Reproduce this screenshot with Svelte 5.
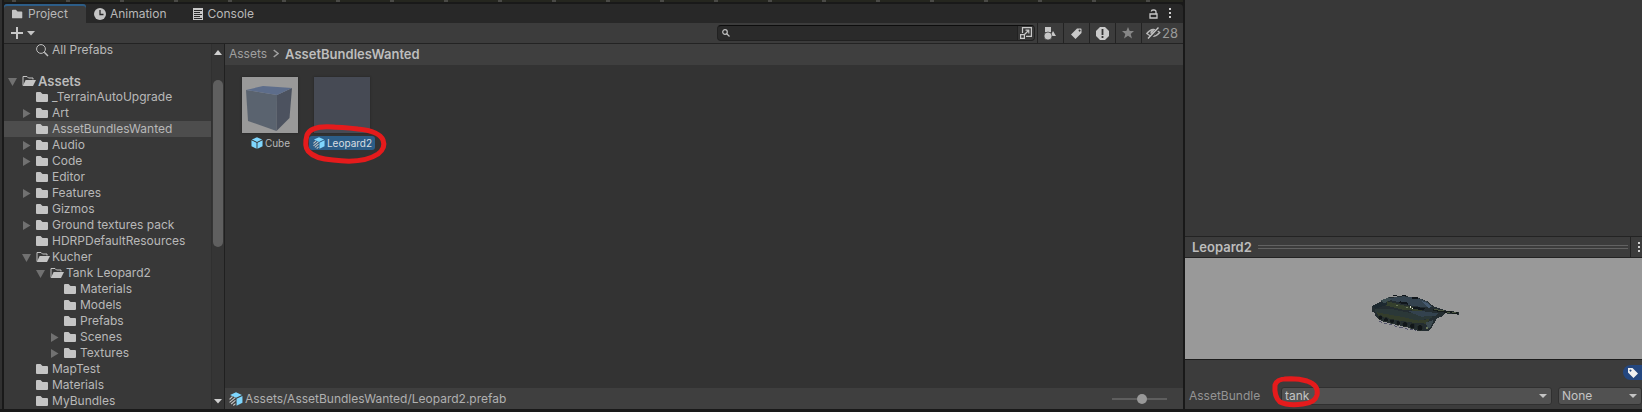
<script>
  const rows = [
    { name: '_TerrainAutoUpgrade', depth: 1 },
    { name: 'Art', depth: 1, fold: 'closed' },
    { name: 'AssetBundlesWanted', depth: 1, selected: true },
    { name: 'Audio', depth: 1, fold: 'closed' },
    { name: 'Code', depth: 1, fold: 'closed' },
    { name: 'Editor', depth: 1 },
    { name: 'Features', depth: 1, fold: 'closed' },
    { name: 'Gizmos', depth: 1 },
    { name: 'Ground textures pack', depth: 1, fold: 'closed' },
    { name: 'HDRPDefaultResources', depth: 1 },
    { name: 'Kucher', depth: 1, fold: 'open' },
    { name: 'Tank Leopard2', depth: 2, fold: 'open' },
    { name: 'Materials', depth: 3 },
    { name: 'Models', depth: 3 },
    { name: 'Prefabs', depth: 3 },
    { name: 'Scenes', depth: 3, fold: 'closed' },
    { name: 'Textures', depth: 3, fold: 'closed' },
    { name: 'MapTest', depth: 1 },
    { name: 'Materials', depth: 1 },
    { name: 'MyBundles', depth: 1 }
  ];
  let zoom = $state(56);
</script>

{#snippet folder(open)}
  <svg class="folder" width="14" height="12" viewBox="0 0 14 12" aria-hidden="true">
    {#if open}
      <path d="M1 10.5V1.5H5L6.5 3H11V4.5" fill="none" stroke="#c4c4c4" />
      <path d="M3.6 5H14L11 11H.8Z" fill="#c4c4c4" />
    {:else}
      <path d="M0 2Q0 1 1 1H4.5L6.5 3H11Q12 3 12 4V10Q12 11 11 11H1Q0 11 0 10Z" fill="#c4c4c4" />
    {/if}
  </svg>
{/snippet}

{#snippet arrow(state)}
  <svg class="fold" width="9" height="9" viewBox="0 0 9 9" aria-hidden="true">
    {#if state === 'open'}
      <path d="M0 1H9L4.5 9Z" fill="#717171" />
    {:else if state === 'closed'}
      <path d="M1 0V9L8.500 4.500Z" fill="#717171" />
    {/if}
  </svg>
{/snippet}

{#snippet prefab(variant, size)}
  <svg width={size} height={size} viewBox="0 0 13 13" aria-hidden="true">
    <path d="M6.500 .2 12 2.700 6.500 5.300 1 2.700Z" fill="#7fd6fd" />
    <path d="M7 6.200 12.500 3.600V10L7 12.800Z" fill="#7fd6fd" />
    {#if variant}
      <path d="M.5 6.800 3.300 4.200M.5 9.600 5.800 5.200M2 11.200 6 7.800M4 12.500 6 10.800" stroke="#c4c4c4" stroke-width="1.100" />
    {:else}
      <path d="M6 6.200 .5 3.600V10L6 12.800Z" fill="#7fd6fd" />
    {/if}
  </svg>
{/snippet}

{#snippet dots()}
  <svg width="3" height="11" viewBox="0 0 3 11" aria-hidden="true">
    <path d="M0 0H2V2H0ZM0 4H2V6H0ZM0 8H2V10H0Z" fill="#d0d0d0" />
  </svg>
{/snippet}

<div class="editor">
  <section class="project">
    <div class="scene-edge"></div>
    <div class="tabs" role="tablist">
      <button class="tab active" role="tab" aria-selected="true">{@render folder(false)}Project</button>
      <button class="tab" role="tab" aria-selected="false">
        <svg width="12" height="12" viewBox="0 0 12 12" aria-hidden="true">
          <circle cx="6" cy="6" r="6" fill="#c4c4c4" />
          <path d="M6 2V6.500H9.500" fill="none" stroke="#282828" stroke-width="1.300" />
        </svg>Animation
      </button>
      <button class="tab" role="tab" aria-selected="false">
        <svg width="11" height="12" viewBox="0 0 11 12" aria-hidden="true">
          <path d="M0 0H10V12H0Z" fill="#c8c8c8" />
          <path d="M1 2.500H9M1 4.500H7M1 6.500H9M1 8.500H7M1 10.500H9" stroke="#282828" />
        </svg>Console
      </button>
      <div class="tab-tools">
        <button aria-label="Lock">
          <svg width="9" height="10" viewBox="0 0 9 10" aria-hidden="true">
            <path d="M1 5H8V9H1ZM7 5V3Q7 1 5 1H4Q2.500 1 2.300 2.500" fill="none" stroke="#c8c8c8" stroke-width="1.300" />
          </svg>
        </button>
        <button aria-label="Window menu">{@render dots()}</button>
      </div>
    </div>

    <div class="toolbar">
      <button class="create" aria-label="Create">
        <svg width="25" height="12" viewBox="0 0 25 12" aria-hidden="true">
          <path d="M6 0V12M0 6H12" stroke="#c8c8c8" stroke-width="2" />
          <path d="M16 4H24L20 8.500Z" fill="#c4c4c4" />
        </svg>
      </button>
      <div class="search">
        <svg width="8" height="8" viewBox="0 0 8 8" aria-hidden="true">
          <circle cx="3" cy="3" r="2.300" fill="none" stroke="#c0c0c0" stroke-width="1.200" />
          <path d="M4.500 4.500 7.500 7.500" stroke="#c0c0c0" stroke-width="1.300" />
        </svg>
        <input type="text" aria-label="Search assets" />
        <button aria-label="Open in search window">
          <svg width="12" height="12" viewBox="0 0 12 12" aria-hidden="true">
            <path d="M2.500 6V.6H11.400V9.400H6M.6 7.600H4.400V11.400H.6Z" fill="none" stroke="#c8c8c8" stroke-width="1.200" />
            <path d="M4.500 7.500 8.500 3.500M5.500 3.200H8.800V6.500" fill="none" stroke="#c8c8c8" stroke-width="1.200" />
          </svg>
        </button>
      </div>
      <div class="filters">
        <button aria-label="Search by type">
          <svg width="12" height="13" viewBox="0 0 12 13" aria-hidden="true">
            <path d="M1 0H7V5H1ZM9 4 12 9H6.500Z" fill="#c8c8c8" />
            <circle cx="4" cy="9" r="4" fill="#c8c8c8" stroke="#3c3c3c" stroke-width=".7" />
          </svg>
        </button>
        <button aria-label="Search by label">
          <svg width="11" height="11" viewBox="0 0 11 11" aria-hidden="true">
            <path fill-rule="evenodd" d="M6 .5H10L10.500 1V5L4.500 11 0 6.500ZM8.600 1.600A1 1 0 1 0 8.610 1.600Z" fill="#c8c8c8" />
          </svg>
        </button>
        <button aria-label="Search by import log">
          <svg width="13" height="13" viewBox="0 0 13 13" aria-hidden="true">
            <path d="M4 0H9L13 4V9L9 13H4L0 9V4Z" fill="#cacaca" />
            <path d="M6.500 2V8M6.500 9V11" stroke="#333" stroke-width="1.800" />
          </svg>
        </button>
        <button aria-label="Save search">
          <svg width="12" height="12" viewBox="0 0 12 12" aria-hidden="true">
            <path d="M6 0 7.700 4H12L8.700 6.900 10 11.500 6 8.800 2 11.500 3.300 6.900 0 4H4.300Z" fill="#868686" />
          </svg>
        </button>
        <button class="hidden-count" aria-label="Hidden packages: 28">
          <svg width="15" height="12" viewBox="0 0 15 12" aria-hidden="true">
            <path d="M.8 6.500Q7 -1 13.800 5.500Q7.500 12.500 .8 6.500Z" fill="none" stroke="#b8b8b8" stroke-width="1.300" />
            <circle cx="7" cy="5.500" r="2.600" fill="#b8b8b8" />
            <path d="M3 12 13 .5" stroke="#3c3c3c" stroke-width="3" />
            <path d="M2 11.500 12.500 .5" stroke="#c8c8c8" stroke-width="1.300" />
          </svg>28
        </button>
      </div>
    </div>

    <div class="browser">
      <nav class="tree" aria-label="Folders">
        <div class="rows">
          <div class="row gap-after" style="--depth: 1">
            {@render arrow()}
            <svg class="folder" width="14" height="13" viewBox="0 0 14 13" aria-hidden="true">
              <circle cx="5" cy="5" r="4.400" fill="none" stroke="#c0c0c0" />
              <path d="M8.300 8.300 12 12" stroke="#c0c0c0" stroke-width="1.500" />
            </svg>All Prefabs
          </div>
          <div class="row root" style="--depth: 0">{@render arrow('open')}{@render folder(true)}Assets</div>
          {#each rows as r}
            <div class="row" class:selected={r.selected} style="--depth: {r.depth}">
              {@render arrow(r.fold)}{@render folder(r.fold === 'open')}{r.name}
            </div>
          {/each}
        </div>
        <div class="scrollbar">
          <svg width="8" height="5" viewBox="0 0 8 5" aria-hidden="true"><path d="M0 5H8L4 0Z" fill="#d0d0d0" /></svg>
          <div class="scroll-thumb"></div>
          <svg width="8" height="5" viewBox="0 0 8 5" aria-hidden="true"><path d="M0 0H8L4 4.500Z" fill="#d0d0d0" /></svg>
        </div>
      </nav>

      <div class="content">
        <div class="crumbs">
          <span>Assets</span>
          <svg width="6" height="9" viewBox="0 0 6 9" aria-hidden="true"><path d="M.7 1 5 4.500 .7 8" fill="none" stroke="#a0a0a0" stroke-width="1.500" /></svg>
          <strong>AssetBundlesWanted</strong>
        </div>
        <div class="assets">
          <div class="asset">
            <div class="thumb light">
              <svg viewBox="0 0 56 56" aria-hidden="true">
                <path d="M4 13 35 18 34.500 54 6 44Z" fill="#5a636f" />
                <path d="M35 18 50 11 47.500 41 34.500 54Z" fill="#4c525f" />
                <path d="M4 13 21 9 50 11 35 18Z" fill="#5d6d8b" />
              </svg>
            </div>
            <div class="name">{@render prefab(false, 12)}Cube</div>
          </div>
          <div class="asset">
            <div class="thumb"></div>
            <div class="name picked">
              {@render prefab(true, 12)}Leopard2
              <svg class="mark" width="84" height="42" viewBox="0 0 84 42" aria-hidden="true">
                <path d="M31 4Q8 2 4 12Q1 23 5 28Q12 36 30 37Q60 41 75 31Q83 25 80 17Q76 8 55 6Q38 4 27 4" />
              </svg>
            </div>
          </div>
        </div>
        <div class="status">
          {@render prefab(true, 14)}
          <span>Assets/AssetBundlesWanted/Leopard2.prefab</span>
          <input type="range" min="0" max="100" bind:value={zoom} aria-label="Thumbnail size" />
        </div>
      </div>
    </div>
  </section>

  <aside class="inspector">
    <div class="properties"></div>
    <header>
      <h2>Leopard2</h2>
      <div class="grip"></div>
      <button aria-label="Preview menu">{@render dots()}</button>
    </header>
    <div class="preview">
      <svg width="90" height="38" viewBox="64 44 270 114" shape-rendering="crispEdges" role="img" aria-label="Leopard2 preview">
        <path d="M66 80 98 64 122 53 160 50 205 55 234 66 253 82 290 94 328 98 328 106 285 102 276 112 262 117 246 145 236 155 205 155 170 143 130 134 100 127 78 112 76 102 66 96Z" fill="#242d31" />
        <path d="M120 56 160 51 204 56 234 67 248 82 226 84 190 80 128 64Z" fill="#34434f" />
        <path d="M68 80 96 68 122 66 112 76 78 88Z" fill="#1d2930" />
        <path d="M92 64 116 54 124 62 104 72Z" fill="#3b4c50" />
        <path d="M112 66 168 80 220 88 214 96 160 91 110 79Z" fill="#35402d" />
        <path d="M76 88 130 90 176 100 244 106 248 116 206 124 132 112 78 100Z" fill="#2b3838" />
        <path d="M82 99 120 106 160 113 206 124 240 119 232 133 196 131 138 122 86 111Z" fill="#343d2b" />
        <path d="M176 96 222 96 266 102 258 110 214 112Z" fill="#33424e" />
        <path d="M218 66 232 70 246 82 236 86Z" fill="#465a70" />
        <path d="M130 48H142V51H130ZM156 47H168V51H156ZM188 54H204V59H188ZM150 66 176 70 174 76 146 71ZM192 82 228 87 222 93 190 88Z" fill="#10161b" />
        <path d="M250 92 286 97 326 102" fill="none" stroke="#151b1b" stroke-width="6" />
        <path d="M254 90 282 95M292 98H300M308 99H318" stroke="#4b5640" stroke-width="3" />
        <g fill="#111619" stroke="#2a332e" stroke-width="2">
          <circle cx="92" cy="115" r="7" /><circle cx="109" cy="121" r="7" /><circle cx="127" cy="126" r="7" />
          <circle cx="146" cy="131" r="7" /><circle cx="166" cy="135" r="8" /><circle cx="188" cy="140" r="8" /><circle cx="211" cy="145" r="9" />
        </g>
        <path d="M88 126 104 132 126 137 166 148 200 154" fill="none" stroke="#53546c" stroke-width="3" stroke-dasharray="9 7" />
        <path d="M228 130 252 122 244 142 234 148Z" fill="#3d4b51" />
        <path d="M180 81H184V87H180ZM186 86H190V90H186Z" fill="#dfe4d2" />
        <path d="M140 76H146V79H140ZM170 84H176V87H170ZM228 144H234V149H228Z" fill="#6b785b" />
      </svg>
    </div>
    <div class="labels">
      <button aria-label="Asset labels">
        <svg width="10" height="10" viewBox="0 0 10 10" aria-hidden="true">
          <path fill-rule="evenodd" d="M0 0H4.500L10 5.500 5.500 10 0 4.500ZM2.500 1.400A1 1 0 1 0 2.510 1.400Z" fill="#f0f0f0" />
        </svg>
      </button>
    </div>
    <div class="bundle">
      <label for="bundle">AssetBundle</label>
      <div class="pick main">
        <select id="bundle"><option>tank</option></select>
        <svg class="mark" width="48" height="32" viewBox="0 0 48 32" aria-hidden="true">
          <path d="M18 3Q5 2 3 9Q2 21 8 26Q16 30 31 28Q43 27 45 19Q47 9 35 5Q25 2 13 3" />
        </svg>
      </div>
      <div class="pick variant">
        <select aria-label="AssetBundle variant"><option>None</option></select>
      </div>
    </div>
  </aside>
</div>

<style>
  :global(body) {
    margin: 0;
    background: #191919;
  }
  .editor {
    display: grid;
    grid-template-columns: minmax(0, 1fr) 457px;
    column-gap: 2px;
    height: 100vh;
    box-sizing: border-box;
    padding-bottom: 3px;
    overflow: hidden;
    background: #191919;
    color: #b8b8b8;
    font: 12px/16px Inter, "Liberation Sans", sans-serif;
  }
  button,
  input,
  select {
    margin: 0;
    padding: 0;
    border: 0;
    background: none;
    color: inherit;
    font: inherit;
  }
  svg {
    display: block;
    flex: none;
  }
  .project {
    display: flex;
    flex-direction: column;
    min-width: 0;
    min-height: 0;
    border-left: 2px solid #303030;
    box-shadow: inset 2px 0 #191919;
    padding-left: 2px;
  }
  .scene-edge {
    height: 2px;
    flex: none;
    border-bottom: 2px solid #191919;
    background: repeating-linear-gradient(90deg, #25261f 0 8px, #4a4a46 8px 12px, #25261f 12px 54px);
  }
  .tabs {
    display: flex;
    flex: none;
    height: 19px;
    background: #282828;
    border-radius: 4px 4px 0 0;
  }
  .tab {
    display: flex;
    align-items: center;
    gap: 4px;
    padding: 1px 18px 0 8px;
    border-radius: 3px 3px 0 0;
    white-space: nowrap;
  }
  .tab.active {
    background: #3c3c3c;
    box-shadow: inset 0 2px #2c5d87;
  }
  .tab .folder {
    width: 12px;
  }
  .tab-tools {
    display: flex;
    align-items: center;
    gap: 11px;
    margin-left: auto;
    padding-right: 11px;
  }
  .toolbar {
    display: flex;
    align-items: center;
    flex: none;
    height: 20px;
    background: #3c3c3c;
    border-bottom: 1px solid #232323;
  }
  .create {
    padding-left: 7px;
  }
  .search {
    display: flex;
    align-items: center;
    width: 318px;
    height: 16px;
    box-sizing: border-box;
    margin-left: auto;
    padding-left: 4px;
    overflow: hidden;
    background: #2a2a2a;
    border: 1px solid #212121;
    border-top-color: #0d0d0d;
    border-radius: 4px;
  }
  .search input {
    flex: 1;
    min-width: 0;
    height: 14px;
    outline: none;
  }
  .search button {
    padding: 1px 2px;
    background: #383838;
    border-left: 1px solid #212121;
  }
  .filters {
    display: flex;
    align-self: stretch;
    margin-left: 2px;
  }
  .filters button {
    display: flex;
    align-items: center;
    justify-content: center;
    width: 26px;
    box-sizing: border-box;
    padding-right: 1px;
    border-left: 1px solid #232323;
  }
  .filters .hidden-count {
    width: 42px;
    gap: 1px;
    color: #9a9a9a;
    font-size: 13px;
  }
  .browser {
    display: flex;
    flex: 1;
    min-height: 0;
  }
  .tree {
    display: flex;
    flex: none;
    width: 220px;
    background: #383838;
    border-right: 1px solid #202020;
  }
  .rows {
    display: flex;
    flex: 1;
    flex-direction: column;
    justify-content: flex-end;
    overflow: hidden;
  }
  .row {
    display: flex;
    flex: none;
    align-items: center;
    height: 16px;
    padding-left: calc(4px + var(--depth) * 14px);
    white-space: nowrap;
  }
  .row .fold {
    margin-right: 5px;
  }
  .row .folder {
    margin-right: 2px;
  }
  .row.gap-after {
    margin-bottom: 15px;
  }
  .row.selected {
    background: #4d4d4d;
  }
  .row.root,
  strong,
  h2 {
    font-size: 13px;
    font-weight: 600;
    color: #bdbdbd;
  }
  .scrollbar {
    display: flex;
    flex-direction: column;
    align-items: center;
    width: 12px;
    padding: 6px 0 5px;
    background: #353535;
    border-left: 1px solid #303030;
  }
  .scroll-thumb {
    width: 10px;
    height: 167px;
    margin: 25px 0 auto;
    border-radius: 5px;
    background: #5f5f5f;
  }
  .content {
    display: flex;
    flex: 1;
    flex-direction: column;
    min-width: 0;
    background: #333;
  }
  .crumbs {
    display: flex;
    align-items: center;
    gap: 6px;
    height: 19px;
    padding: 0 4px 2px;
    background: #3f3f3f;
    color: #a0a0a0;
  }
  .assets {
    display: flex;
    flex: 1;
    align-items: flex-start;
    gap: 16px;
    padding: 12px 17px;
  }
  .asset {
    display: flex;
    flex-direction: column;
    align-items: center;
    gap: 3px;
    width: 56px;
  }
  .thumb {
    width: 56px;
    height: 56px;
    background: #464a54;
    box-shadow: 0 0 2px #222;
  }
  .thumb.light {
    background: #999;
  }
  .name {
    position: relative;
    display: flex;
    align-items: center;
    gap: 2px;
    height: 14px;
    padding: 0 3px 0 4px;
    border-radius: 3px;
    font-size: 10px;
    line-height: 14px;
  }
  .name.picked {
    background: #2c5d87;
    color: #d8dde2;
  }
  .mark {
    position: absolute;
    overflow: visible;
    fill: none;
    stroke: #e51b1c;
    stroke-width: 5;
    stroke-linecap: round;
    pointer-events: none;
  }
  .name .mark {
    left: -6px;
    top: -13px;
  }
  .status {
    display: flex;
    align-items: center;
    gap: 2px;
    height: 21px;
    padding: 0 16px 0 4px;
    background: #3f3f3f;
    color: #b0b0b0;
  }
  input[type='range'] {
    width: 55px;
    height: 10px;
    margin-left: auto;
    appearance: none;
    background: linear-gradient(#5e5e5e, #5e5e5e) center / 100% 2px no-repeat;
  }
  input[type='range']::-webkit-slider-thumb {
    appearance: none;
    width: 10px;
    height: 10px;
    border-radius: 50%;
    background: #999;
  }
  .inspector {
    display: flex;
    flex-direction: column;
    min-width: 0;
    overflow: hidden;
    background: #3c3c3c;
  }
  .properties {
    flex: 1;
    background: #383838;
  }
  header {
    display: flex;
    align-items: center;
    height: 20px;
    padding-left: 7px;
    border-top: 1px solid #232323;
    border-bottom: 1px solid #232323;
  }
  h2 {
    margin: 0;
    line-height: 16px;
  }
  .grip {
    flex: 1;
    height: 2px;
    margin: 0 2px 0 6px;
    border-top: 1px solid #626262;
    border-bottom: 1px solid #626262;
  }
  header button {
    align-self: stretch;
    padding: 0 1px 0 7px;
    border-left: 1px solid #232323;
  }
  .preview {
    display: flex;
    align-items: center;
    justify-content: center;
    height: 102px;
    padding-left: 4px;
    padding-top: 9px;
    box-sizing: border-box;
    background: #999;
    border-bottom: 1px solid #1c1c1c;
  }
  .labels {
    display: flex;
    justify-content: flex-end;
    padding: 5px 0 7px;
  }
  .labels button {
    padding: 3px 4px 2px 5px;
    border-radius: 8px 0 0 8px;
    background: #24477f;
  }
  .bundle {
    display: flex;
    align-items: center;
    gap: 6px;
    padding: 0 0 4px 4px;
  }
  .bundle label {
    width: 86px;
    color: #949494;
  }
  .pick {
    position: relative;
  }
  .pick.main {
    flex: 1;
  }
  .pick.variant {
    width: 84px;
  }
  .pick::after {
    content: '';
    position: absolute;
    right: 5px;
    top: 7px;
    border: 4px solid transparent;
    border-top-color: #c4c4c4;
    border-bottom: 0;
    pointer-events: none;
  }
  select {
    display: block;
    width: 100%;
    height: 18px;
    padding-left: 3px;
    appearance: none;
    background: #515151;
    border: 1px solid #303030;
    border-radius: 3px;
    color: #c4c4c4;
    outline: none;
  }
  .pick .mark {
    left: -9px;
    top: -11px;
  }
</style>
